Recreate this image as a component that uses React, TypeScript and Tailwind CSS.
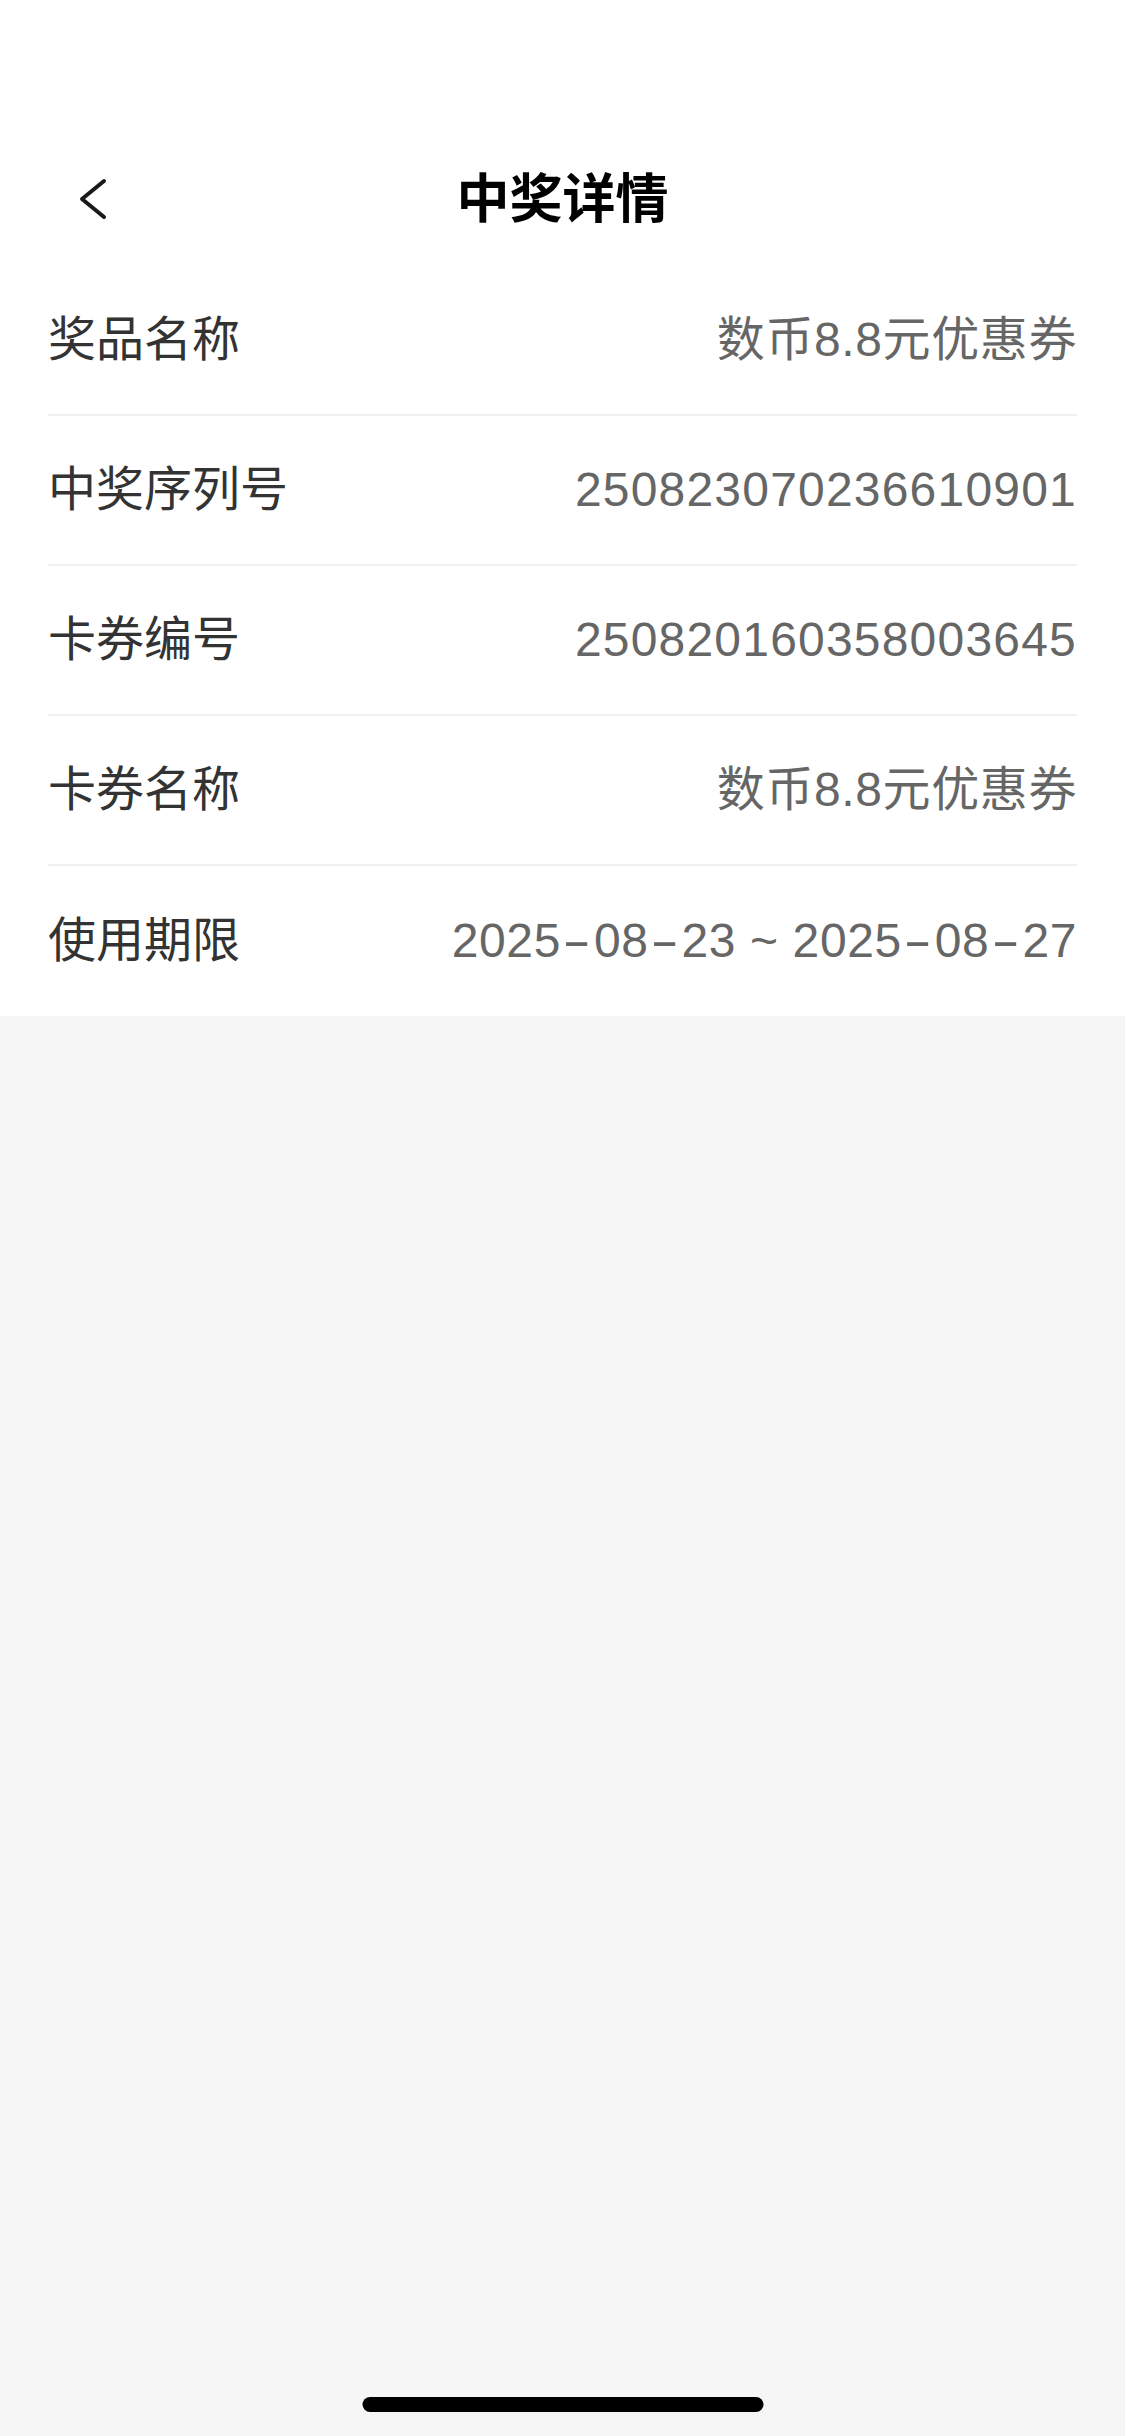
import React from 'react';

type Row = {
  label: string;
  value: string;
};

const rows: Row[] = [
  { label: '奖品名称', value: '数币8.8元优惠券' },
  { label: '中奖序列号', value: '250823070236610901' },
  { label: '卡券编号', value: '250820160358003645' },
  { label: '卡券名称', value: '数币8.8元优惠券' },
  { label: '使用期限', value: '2025-08-23 ~ 2025-08-27' },
];

const font = { fontFamily: '"Liberation Sans", "Noto Sans CJK SC", sans-serif' };

// iOS font draws the hyphen as a wide dash, so stretch it
const renderValue = (value: string) => {
  const parts = value.split('-');
  return parts.map((part, i) => (
    <React.Fragment key={i}>
      {part}
      {i < parts.length - 1 && (
        <span className="inline-block w-[33px] text-center">
          <span className="inline-block scale-x-[1.8]">-</span>
        </span>
      )}
    </React.Fragment>
  ));
};

export default function App() {
  return (
    <div
      className="relative flex h-[2436px] w-full flex-col bg-[#f6f6f6]"
      style={font}
    >
      {/* Status bar + nav */}
      <div className="bg-white pt-[132px]">
        <div className="relative flex h-[134px] items-center justify-center">
          <button className="absolute left-[74px] top-1/2 -translate-y-1/2 p-0">
            <svg width="34" height="42" viewBox="0 0 34 42" fill="none">
              <polyline
                points="30,3 8,21 30,39"
                stroke="#1a1a1a"
                strokeWidth="4"
                strokeLinecap="round"
                strokeLinejoin="round"
              />
            </svg>
          </button>
          <h1 className="text-[53px] font-bold leading-none text-black">中奖详情</h1>
        </div>
      </div>

      {/* Detail list */}
      <div className="bg-white px-[48px]">
        {rows.map((row, i) => (
          <div
            key={row.label}
            className={`flex h-[150px] items-center justify-between ${
              i < rows.length - 1 ? 'border-b-2 border-[#f0f0f0]' : ''
            }`}
          >
            <span className="text-[48px] leading-none text-[#333333]">{row.label}</span>
            <span
              className={`text-[48px] leading-none text-[#666666] ${
                /^\d+$/.test(row.value) ? 'tracking-[1.2px]' : 'tracking-[0.6px]'
              }`}
            >
              {renderValue(row.value)}
            </span>
          </div>
        ))}
      </div>

      {/* Home indicator */}
      <div className="absolute bottom-[24px] left-1/2 h-[15px] w-[401px] -translate-x-1/2 rounded-full bg-black" />
    </div>
  );
}
